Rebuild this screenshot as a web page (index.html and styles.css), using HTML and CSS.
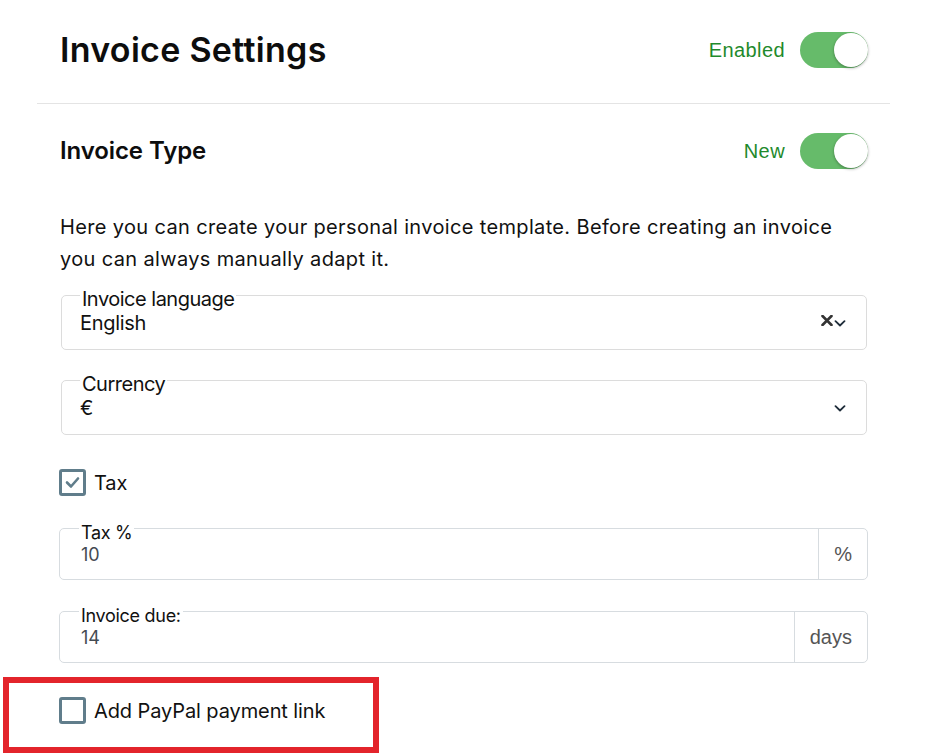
FILE: index.html
```html
<!DOCTYPE html>
<html lang="en">
<head>
<meta charset="utf-8">
<title>Invoice Settings</title>
<link rel="stylesheet" href="styles.css">
</head>
<body>
<div class="panel">
  <header class="panel-head">
    <h1 class="panel-title">Invoice Settings</h1>
    <div class="status">
      <span class="status-label">Enabled</span>
      <span class="toggle"><span class="knob"></span></span>
    </div>
  </header>
  <section class="panel-body">
    <div class="section-head">
      <h2 class="section-title">Invoice Type</h2>
      <div class="status">
        <span class="status-label">New</span>
        <span class="toggle"><span class="knob"></span></span>
      </div>
    </div>
    <p class="intro">Here you can create your personal invoice template. Before creating an invoice you can always manually adapt it.</p>

    <div class="select-field first">
      <span class="float-label">Invoice language</span>
      <span class="select-value">English</span>
      <span class="select-icons">
        <svg class="clear-icon" width="12" height="11" viewBox="0 0 12 11"><path d="M1.5 1 L10.5 10 M10.5 1 L1.5 10" stroke="#333" stroke-width="2.6" stroke-linecap="round"/></svg>
        <svg class="chev" width="12" height="7" viewBox="0 0 12 7"><path d="M1.5 1.2 L6 5.5 L10.5 1.2" fill="none" stroke="#1f2d3a" stroke-width="1.8" stroke-linecap="round" stroke-linejoin="round"/></svg>
      </span>
    </div>

    <div class="select-field">
      <span class="float-label">Currency</span>
      <span class="select-value">€</span>
      <span class="select-icons">
        <svg class="chev" width="12" height="7" viewBox="0 0 12 7"><path d="M1.5 1.2 L6 5.5 L10.5 1.2" fill="none" stroke="#1f2d3a" stroke-width="1.8" stroke-linecap="round" stroke-linejoin="round"/></svg>
      </span>
    </div>

    <label class="check-row tax-row">
      <span class="checkbox checked">
        <svg width="21" height="21" viewBox="0 0 21 21"><path d="M5 10.5 L9 14.5 L16 6.5" fill="none" stroke="#607d8b" stroke-width="2.6" stroke-linecap="round" stroke-linejoin="round"/></svg>
      </span>
      <span class="check-label">Tax</span>
    </label>

    <div class="input-field tax-field">
      <div class="input-main">
        <span class="float-label small">Tax %</span>
        <span class="input-value">10</span>
      </div>
      <span class="addon">%</span>
    </div>

    <div class="input-field due-field">
      <div class="input-main">
        <span class="float-label small">Invoice due:</span>
        <span class="input-value">14</span>
      </div>
      <span class="addon">days</span>
    </div>

    <label class="check-row paypal-row">
      <span class="checkbox"></span>
      <span class="check-label">Add PayPal payment link</span>
    </label>
  </section>
</div>
<div class="highlight"></div>
</body>
</html>
```

FILE: styles.css
```css
* { box-sizing: border-box; }

html, body {
  margin: 0;
  padding: 0;
  background: #ffffff;
}

body {
  font-family: Inter, "Noto Sans", sans-serif;
  color: #111111;
  position: relative;
  min-height: 755px;
  overflow: hidden;
}

.panel {
  margin-left: 37px;
  width: 853px;
}

.panel-head {
  display: flex;
  align-items: center;
  justify-content: space-between;
  padding: 32px 22px 35px 23px;
  border-bottom: 1px solid #e4e4e4;
}

.panel-title {
  margin: 0;
  font-size: 34px;
  line-height: 36px;
  font-weight: 600;
  letter-spacing: 0.3px;
  color: #0d0d0d;
}

.status {
  display: flex;
  align-items: center;
  gap: 15px;
}

.status-label {
  font-family: "Liberation Sans", Arial, sans-serif;
  font-size: 20px;
  color: #1f8a2c;
  letter-spacing: 0.4px;
}

.toggle {
  position: relative;
  display: block;
  width: 68px;
  height: 36px;
  border-radius: 18px;
  background: #66bb6a;
}

.knob {
  position: absolute;
  top: 1px;
  right: 0;
  width: 34px;
  height: 34px;
  border-radius: 50%;
  background: #ffffff;
  box-shadow: 0 1px 3px rgba(0, 0, 0, 0.35);
}

.panel-body {
  padding: 0 22px 0 23px;
  display: flex;
  flex-direction: column;
}

.section-head {
  margin-top: 29px;
  display: flex;
  align-items: center;
  justify-content: space-between;
}

.section-title {
  margin: 0;
  font-size: 24px;
  line-height: 36px;
  font-weight: 600;
  letter-spacing: -0.1px;
  color: #0d0d0d;
}

.intro {
  margin: 42px 0 0;
  max-width: 782px;
  font-size: 20px;
  line-height: 32px;
  letter-spacing: 0.35px;
  color: #111111;
}

.select-field {
  position: relative;
  margin: 30px 1px 0 1px;
  height: 55px;
  border: 1px solid #dcdcdc;
  border-radius: 5px;
  padding: 15px 20px 14px 18px;
  display: flex;
  align-items: center;
  justify-content: space-between;
}

.select-field.first {
  margin-top: 20px;
}

.float-label {
  position: absolute;
  top: -7px;
  left: 18px;
  padding: 0 2px;
  background: #ffffff;
  font-size: 20px;
  line-height: 20px;
  letter-spacing: -0.5px;
  color: #111111;
}

.float-label.small {
  top: -5px;
  left: 19px;
  font-size: 18px;
  line-height: 18px;
  letter-spacing: -0.3px;
}

.select-value {
  font-size: 20px;
  line-height: 24px;
  letter-spacing: -0.3px;
  color: #111111;
}

.select-icons {
  display: flex;
  align-items: center;
  gap: 1px;
}

.clear-icon { display: block; margin-top: -6px; }
.chev { display: block; }

.check-row {
  display: flex;
  align-items: center;
  gap: 8px;
  height: 27px;
  margin-left: -1px;
}

.tax-row { margin-top: 34px; }
.paypal-row { margin-top: 34px; }

.checkbox {
  width: 27px;
  height: 27px;
  border: 3px solid #607d8b;
  border-radius: 3px;
  display: flex;
  align-items: center;
  justify-content: center;
  flex: none;
}

.checkbox svg { display: block; }

.check-label {
  font-size: 20px;
  line-height: 24px;
  letter-spacing: -0.1px;
  color: #111111;
}

.input-field {
  display: flex;
  height: 52px;
  border: 1px solid #d7dce0;
  border-radius: 5px;
  margin-left: -1px;
}

.tax-field { margin-top: 32px; }
.due-field { margin-top: 31px; }

.input-main {
  position: relative;
  flex: 1;
  padding: 14px 20px 12px 21px;
}

.input-value {
  display: block;
  font-size: 18px;
  line-height: 24px;
  color: #444b52;
}

.addon {
  display: flex;
  align-items: center;
  padding: 0 15px 0 15px;
  border-left: 1px solid #d7dce0;
  font-family: "Liberation Sans", Arial, sans-serif;
  font-size: 20px;
  color: #555555;
}

.highlight {
  position: absolute;
  left: 3px;
  top: 677px;
  width: 376px;
  height: 76px;
  border: 6px solid #e3242b;
  pointer-events: none;
}
```
